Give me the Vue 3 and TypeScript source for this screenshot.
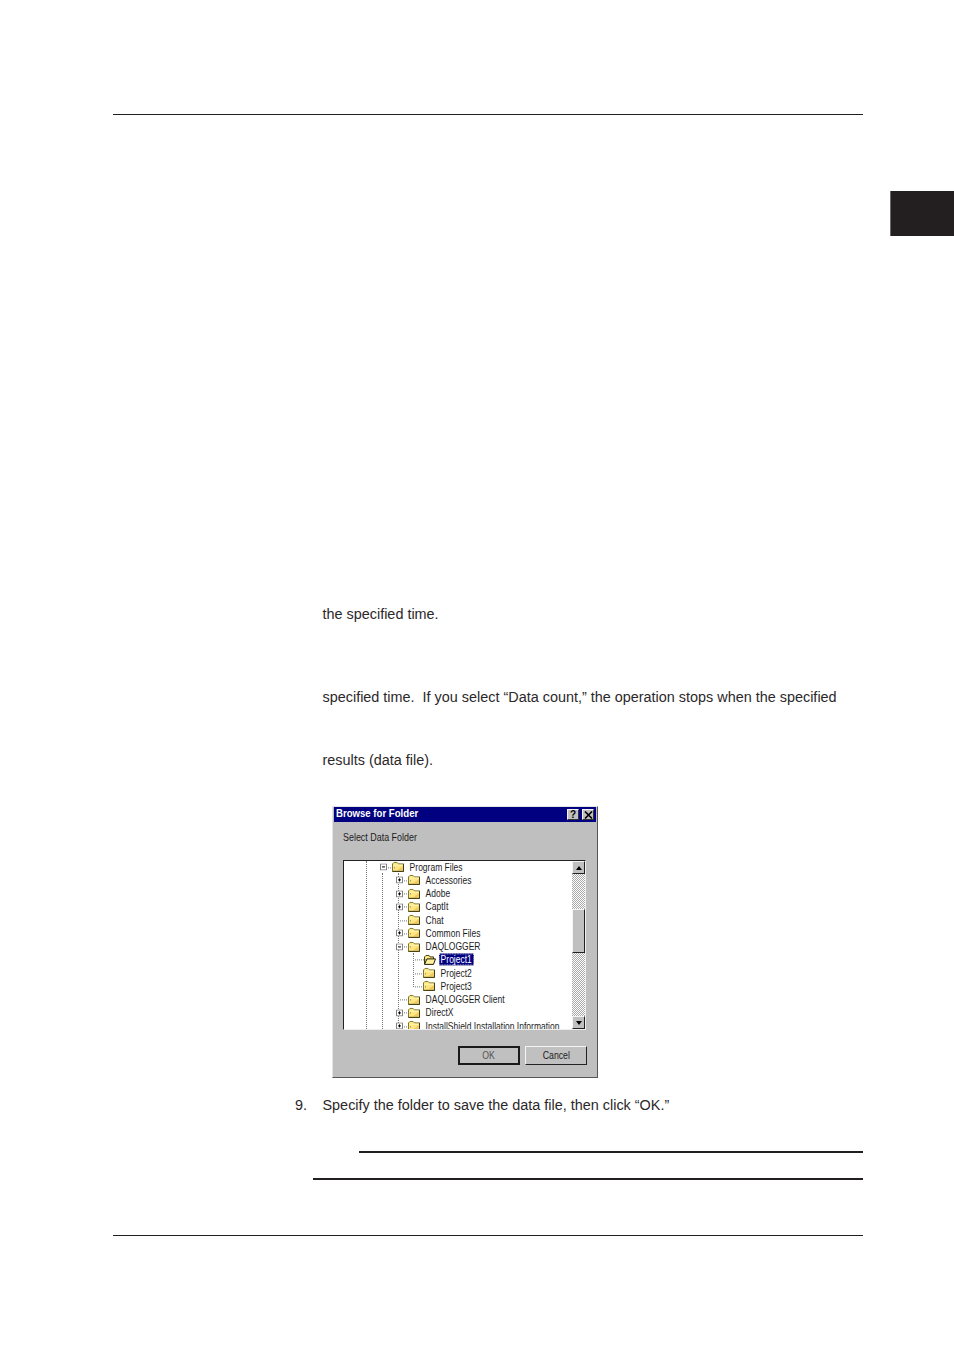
<script setup lang="ts">
interface TreeRow {
  level: number
  label: string
  expander?: 'plus' | 'minus'
  open?: boolean
  selected?: boolean
}

const stopLine = 'specified time.  If you select “Data count,” the operation stops when the specified'

const rows: TreeRow[] = [
  { level: 1, label: 'Program Files', expander: 'minus' },
  { level: 2, label: 'Accessories', expander: 'plus' },
  { level: 2, label: 'Adobe', expander: 'plus' },
  { level: 2, label: 'CaptIt', expander: 'plus' },
  { level: 2, label: 'Chat' },
  { level: 2, label: 'Common Files', expander: 'plus' },
  { level: 2, label: 'DAQLOGGER', expander: 'minus' },
  { level: 3, label: 'Project1', open: true, selected: true },
  { level: 3, label: 'Project2' },
  { level: 3, label: 'Project3' },
  { level: 2, label: 'DAQLOGGER Client' },
  { level: 2, label: 'DirectX', expander: 'plus' },
  { level: 2, label: 'InstallShield Installation Information', expander: 'plus' },
]

const guides = [
  { left: 22, top: 0, height: 168 },
  { left: 38, top: 12, height: 156 },
  { left: 54, top: 12, height: 156 },
  { left: 69, top: 92, height: 34 },
]

const rowIndent = (level: number): string => `${24 + (level - 1) * 15.6}px`
</script>

<template>
  <div class="page">
    <div class="thumb-tab"></div>
    <div class="rule rule-top"></div>

    <p class="copy copy-a">the specified time.</p>
    <p class="copy copy-b">{{ stopLine }}</p>
    <p class="copy copy-c">results (data file).</p>

    <div class="dialog">
      <div class="titlebar">
        <span class="title">Browse for Folder</span>
        <div class="title-buttons">
          <span class="cap-btn help">?</span>
          <span class="cap-btn close">
            <svg width="9" height="8" viewBox="0 0 9 8"><path d="M1 0.5 L8 7.5 M8 0.5 L1 7.5" stroke="#000" stroke-width="1.6" fill="none" /></svg>
          </span>
        </div>
      </div>

      <div class="prompt"><span class="squeeze prompt-text">Select Data Folder</span></div>

      <div class="tree-box">
        <div class="tree">
          <span
            v-for="g in guides"
            :key="g.left"
            class="guide"
            :style="{ left: g.left + 'px', top: g.top + 'px', height: g.height + 'px' }"
          ></span>
          <div
            v-for="row in rows"
            :key="row.label"
            class="row"
            :style="{ paddingLeft: rowIndent(row.level) }"
          >
            <span class="node-slot">
              <span v-if="row.expander" class="expander">
                <svg width="7" height="7" viewBox="0 0 7 7">
                  <rect x="0.5" y="0.5" width="6" height="6" fill="#fff" stroke="#808080" />
                  <path d="M2 3.5 H5" stroke="#000" fill="none" />
                  <path v-if="row.expander === 'plus'" d="M3.5 2 V5" stroke="#000" fill="none" />
                </svg>
              </span>
              <span class="connector"></span>
            </span>
            <svg class="folder" width="13" height="11" viewBox="0 0 13 11">
              <template v-if="row.open">
                <path d="M1.5 9.5 V2.5 L3 1 H6 L7 2.5 H10.5 V4.5" fill="#ffe680" stroke="#3f3d14" />
                <path d="M1.5 10 L4 4.5 H12.5 L10.5 10 Z" fill="#fff0a0" stroke="#1f1e08" />
              </template>
              <template v-else>
                <path d="M0.5 2.5 L2 1 H5 L6.5 2.5 H11.5 V10 H0.5 Z" fill="#ffe77e" stroke="#7a7730" />
                <path d="M1.5 3.3 H10.8 V4.2 H1.5 Z" fill="#fffbd0" />
                <path d="M4.5 9.3 L10.8 4.6 V9.3 Z" fill="#f0c868" />
                <path d="M11.5 2.5 V10 H0.5" fill="none" stroke="#3f3d14" />
              </template>
            </svg>
            <span class="label squeeze" :class="{ selected: row.selected }">{{ row.label }}</span>
          </div>
        </div>
        <div class="scrollbar">
          <span class="sb-btn"><i class="arrow up"></i></span>
          <span class="sb-track sb-track-a"></span>
          <span class="sb-thumb"></span>
          <span class="sb-track sb-track-b"></span>
          <span class="sb-btn"><i class="arrow down"></i></span>
        </div>
      </div>

      <div class="actions">
        <span class="btn default"><span class="squeeze-c">OK</span></span>
        <span class="btn"><span class="squeeze-c">Cancel</span></span>
      </div>
    </div>

    <div class="step">
      <span class="step-num">9.</span>
      <span>Specify the folder to save the data file, then click “OK.”</span>
    </div>

    <div class="rule heavy rule-note-a"></div>
    <div class="rule heavy rule-note-b"></div>
    <div class="rule rule-bottom"></div>
  </div>
</template>

<style>
html,
body {
  margin: 0;
  background: #fff;
}
</style>

<style scoped>
.page {
  position: relative;
  width: 954px;
  height: 1350px;
  padding-top: 114px;
  box-sizing: border-box;
  background: #fff;
  overflow: hidden;
  font-family: "Liberation Sans", Arial, sans-serif;
  color: #2b2829;
}

.thumb-tab {
  position: absolute;
  top: 191px;
  right: 0;
  width: 63px;
  height: 45px;
  background: #231f20;
  border-left: 1px solid #6d6a6b;
}

.rule {
  height: 1px;
  background: #231f20;
}

.rule-top {
  width: 750px;
  margin-left: 113px;
}

.rule-bottom {
  width: 750px;
  margin: 55px 0 0 113px;
}

.heavy {
  height: 2px;
}

.rule-note-a {
  width: 504px;
  margin: 36px 0 0 359px;
}

.rule-note-b {
  width: 550px;
  margin: 25px 0 0 313px;
}

.copy,
.step {
  font-size: 14.42px;
  line-height: 20px;
  white-space: pre;
}

.copy {
  margin: 0 0 0 322.5px;
}

.copy-a {
  margin-top: 489px;
}

.copy-b {
  margin-top: 63px;
}

.copy-c {
  margin-top: 43px;
}

.step {
  display: flex;
  margin: 17px 0 0 295px;
}

.step-num {
  width: 27.5px;
}

.dialog {
  width: 266px;
  height: 272px;
  margin: 36px 0 0 332px;
  box-sizing: border-box;
  display: flex;
  flex-direction: column;
  padding: 0 1px 1px;
  background: #bfbfbf;
  border: 1px solid;
  border-color: #e4e4e4 #555 #555 #e4e4e4;
  font-size: 10.5px;
  color: #1c1c1c;
}

.titlebar {
  height: 15px;
  display: flex;
  align-items: center;
  justify-content: space-between;
  padding: 0 2px;
  background: #000080;
  color: #fff;
}

.title {
  font-weight: 700;
  font-size: 10.5px;
  line-height: 13px;
  margin-bottom: 2px;
  display: inline-block;
  white-space: nowrap;
  transform: scaleX(0.915);
  transform-origin: left center;
}

.title-buttons {
  display: flex;
  gap: 3px;
}

.cap-btn {
  width: 12px;
  height: 11px;
  display: flex;
  align-items: center;
  justify-content: center;
  box-sizing: border-box;
  background: #c0c0c0;
  border: 1px solid;
  border-color: #f4f4f4 #333 #333 #f4f4f4;
  color: #000;
  font-weight: 700;
  font-size: 10px;
  line-height: 1;
}

.squeeze {
  display: inline-block;
  transform: scaleX(0.81);
  transform-origin: left center;
  white-space: nowrap;
}

.prompt-text {
  transform: scaleX(0.85);
}

.squeeze-c {
  display: inline-block;
  transform: scaleX(0.83);
  white-space: nowrap;
}

.prompt {
  margin: 8px 0 0 9px;
  height: 14px;
  line-height: 14px;
}

.tree-box {
  display: flex;
  width: 243px;
  height: 170px;
  margin: 16px 0 0 9px;
  box-sizing: border-box;
  background: #fff;
  border: 1px solid;
  border-color: #222 #eee #eee #222;
}

.tree {
  position: relative;
  flex: 1;
  min-width: 0;
  overflow: hidden;
}

.guide {
  position: absolute;
  width: 0;
  border-left: 1px dotted #777;
}

.row {
  position: relative;
  display: flex;
  align-items: center;
  height: 13.25px;
  white-space: nowrap;
  transform: translateY(-0.6px);
}

.node-slot {
  position: relative;
  width: 15px;
  height: 100%;
  flex: none;
  margin-left: 12px;
  margin-right: 1px;
}

.expander {
  position: absolute;
  left: 0;
  top: 3px;
  width: 7px;
  height: 7px;
  display: block;
  z-index: 1;
}

.expander svg {
  display: block;
}

.connector {
  position: absolute;
  left: 4px;
  right: 0;
  top: 6.5px;
  border-top: 1px dotted #777;
}

.folder {
  flex: none;
  margin-left: -4px;
}

.label {
  margin-left: 3px;
  padding: 0 2px;
  line-height: 12px;
}

.label.selected {
  background: #000080;
  color: #fff;
  outline: 1px dotted #c9c9c9;
  outline-offset: -1px;
}

.scrollbar {
  width: 13px;
  flex: none;
  display: flex;
  flex-direction: column;
}

.sb-btn,
.sb-thumb {
  box-sizing: border-box;
  background: #c0c0c0;
  border: 1px solid;
  border-color: #f4f4f4 #222 #222 #f4f4f4;
}

.sb-btn {
  height: 13px;
  display: flex;
  align-items: center;
  justify-content: center;
  flex: none;
}

.arrow {
  width: 0;
  height: 0;
  border-left: 3.5px solid transparent;
  border-right: 3.5px solid transparent;
}

.arrow.up {
  border-bottom: 4px solid #000;
}

.arrow.down {
  border-top: 4px solid #000;
}

.sb-track {
  background: repeating-conic-gradient(#fff 0 25%, #a8a8a8 0 50%) 0 0 / 2px 2px;
}

.sb-track-a {
  height: 35px;
}

.sb-track-b {
  flex: 1;
}

.sb-thumb {
  height: 44px;
  flex: none;
}

.actions {
  display: flex;
  justify-content: flex-end;
  gap: 5px;
  margin: 16px 9px 0 0;
}

.btn {
  width: 62px;
  height: 19px;
  padding-bottom: 1px;
  display: flex;
  align-items: center;
  justify-content: center;
  box-sizing: border-box;
  background: #c0c0c0;
  border: 1px solid;
  border-color: #f4f4f4 #222 #222 #f4f4f4;
}

.btn.default {
  border: 2px solid #1a1a1a;
  color: #555;
}
</style>
